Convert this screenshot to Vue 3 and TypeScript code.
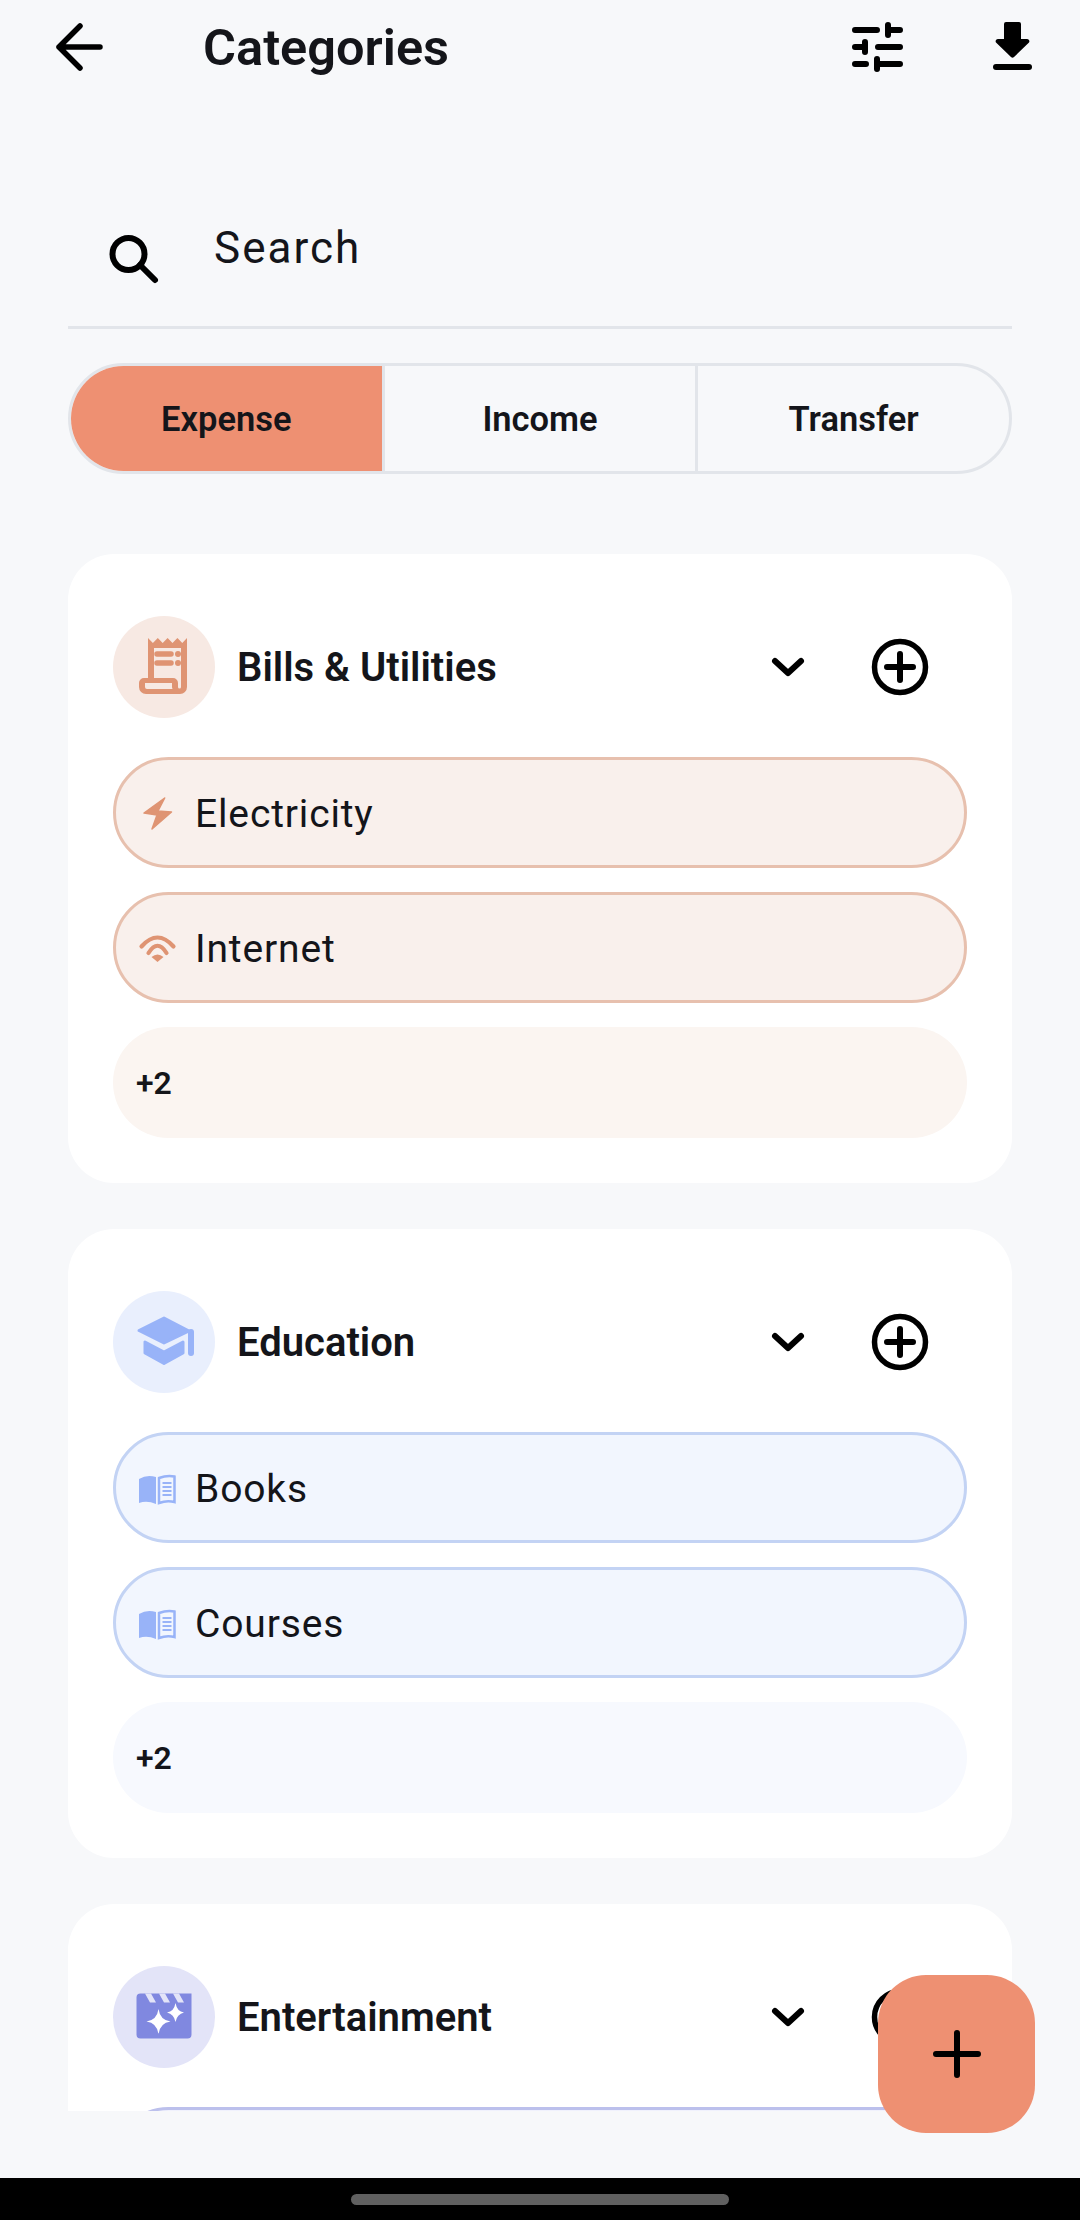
<template>
  <div class="screen">
    <div class="top-bar">
      <svg class="back" width="50" height="48" viewBox="0 0 50 48">
        <path d="M26 3 5 24l21 21M5 24h41" fill="none" stroke="#000" stroke-width="5.500" stroke-linecap="round" stroke-linejoin="round" />
      </svg>
      <div class="page-title">Categories</div>
      <svg class="sliders" width="56" height="54" viewBox="0 0 56 54">
        <g fill="none" stroke="#000" stroke-width="6" stroke-linecap="round">
          <path d="M5 10h22M38 5v10M38 10h12M5 27h10M15 22v10M28 27h22M5 44h11M27 39v10M27 44h23" />
        </g>
      </svg>
      <svg class="download" width="45" height="54" viewBox="0 0 45 54">
        <path d="M16 2h13a2 2 0 0 1 2 2v15h6c2 0 3 2 2 3.500L24 37c-1 1-2 1-3 0L6 22.500C5 21 6 19 8 19h6V4a2 2 0 0 1 2-2z" fill="#000" />
        <path d="M6 47h33" stroke="#000" stroke-width="6" stroke-linecap="round" />
      </svg>
    </div>

    <div class="search">
      <svg width="54" height="54" viewBox="0 0 54 54">
        <circle cx="22.500" cy="21" r="16" fill="none" stroke="#000" stroke-width="6" />
        <path d="M34 32l15 15" stroke="#000" stroke-width="6" stroke-linecap="round" />
      </svg>
      <span class="search-text">Search</span>
    </div>

    <div class="segments">
      <div v-for="(tab, i) in tabs" :key="tab" :class="['segment', { active: i === 0 }]">{{ tab }}</div>
    </div>

    <div class="list">
      <div v-for="cat in categories" :key="cat.name" class="card">
        <div class="card-head">
          <div class="cat-icon" :style="{ background: cat.soft }">
            <svg width="60" height="60" viewBox="0 0 60 60">
              <template v-if="cat.icon === 'receipt'">
                <path fill-rule="evenodd" :fill="cat.color" d="M14 1l4.900 5 4.900-5 4.900 5 4.900-5 4.900 5 4.900-5 4.900 5 4.700-5v49a7 7 0 0 1-7 7H12a7 7 0 0 1-7-7v-4a5 5 0 0 1 5-5h4zM20 11v30h19a5 5 0 0 1 5 5v4a1.500 1.500 0 0 0 3 0V11zM11 46v4a2 2 0 0 0 2 2h25.500a7 7 0 0 1-.500-2v-4z" />
                <path d="M23 17h14M23 26h14" :stroke="cat.color" stroke-width="5.500" stroke-linecap="round" />
                <circle cx="44" cy="17" r="3" :fill="cat.color" />
                <circle cx="44" cy="26" r="3" :fill="cat.color" />
              </template>
              <template v-else-if="cat.icon === 'school'">
                <path :fill="cat.color" stroke-linejoin="round" :stroke="cat.color" stroke-width="3" d="M30 6 5 18.500 30 31 55 19z" />
                <path :fill="cat.color" stroke-linejoin="round" :stroke="cat.color" stroke-width="3" d="M11 30v11l19 10.500L49 41V30l-19 10z" />
                <path d="M57 20v21" :stroke="cat.color" stroke-width="6" stroke-linecap="round" />
              </template>
              <template v-else>
                <path :fill="cat.color" d="M2.500 10.500a4 4 0 0 1 4-4h51v41a4 4 0 0 1-4 4h-47a4 4 0 0 1-4-4z" />
                <path :fill="cat.soft" d="M11 6.500h6l5 9h-6zM25 6.500h6l5 9h-6zM39 6.500h6l5 9h-6z" />
                <path fill="#fff" d="M24.500 22Q26 33 36.500 34.500 26 36 24.500 47 23 36 12.500 34.500 23 33 24.500 22z" />
                <path fill="#fff" d="M41.500 16Q43 24.500 50 25.500 43 27 41.500 35 40 27 33 25.500 40 24.500 41.500 16z" />
              </template>
            </svg>
          </div>
          <div class="cat-name">{{ cat.name }}</div>
          <svg class="chevron" width="36" height="26" viewBox="0 0 36 26">
            <path d="M5 7l13 12L31 7" fill="none" stroke="#000" stroke-width="6" stroke-linecap="round" stroke-linejoin="round" />
          </svg>
          <svg class="add" width="60" height="60" viewBox="0 0 60 60">
            <circle cx="30" cy="30" r="25.500" fill="none" stroke="#000" stroke-width="5.500" />
            <path d="M17 30h26M30 17v26" stroke="#000" stroke-width="6" stroke-linecap="round" />
          </svg>
        </div>
        <div class="items">
          <div
            v-for="item in cat.items"
            :key="item.label"
            class="item"
            :style="{ background: cat.tint, borderColor: cat.border }"
          >
            <svg width="44" height="40" viewBox="0 0 44 40">
              <path v-if="item.icon === 'bolt'" d="M27.700 5 7 20l13 2-5 14 19.500-17-13.500-1z" :fill="cat.color" :stroke="cat.color" stroke-width="1.500" stroke-linejoin="round" />
              <template v-else-if="item.icon === 'wifi'">
                <path d="M4.500 18.500Q20.500 .5 36.500 18.500M11.500 25Q20.500 10.500 29.500 25" fill="none" :stroke="cat.color" stroke-width="4.200" stroke-linecap="round" />
                <path d="M14.500 29Q20.500 24 26.500 29L20.500 34z" :fill="cat.color" />
              </template>
              <template v-else-if="item.icon === 'book'">
                <path d="M2 11Q10 6 19 9v27Q10 32 2 35z" :fill="cat.color" />
                <path d="M22 10Q30 7 37.500 8.500V34Q30 32 22 35z" fill="none" :stroke="cat.color" stroke-width="2.500" />
                <path d="M25.500 15h9M25.500 19h9M25.500 23h9M25.500 27h9" :stroke="cat.color" stroke-width="2" />
              </template>
            </svg>
            <span v-if="item.label" class="item-label">{{ item.label }}</span>
          </div>
          <div v-if="cat.more" class="more" :style="{ background: cat.faint }">{{ cat.more }}</div>
        </div>
      </div>
    </div>

    <div class="fab">
      <svg width="56" height="56" viewBox="0 0 56 56">
        <path d="M28 7v42M7 28h42" stroke="#000" stroke-width="6" stroke-linecap="round" />
      </svg>
    </div>

    <div class="nav-bar"><div class="nav-pill"></div></div>
  </div>
</template>

<script setup lang="ts">
interface SubItem {
  label: string
  icon: string
}

interface Category {
  name: string
  icon: string
  color: string
  soft: string
  tint: string
  border: string
  faint: string
  more: string
  items: SubItem[]
}

const tabs = ['Expense', 'Income', 'Transfer']

const categories: Category[] = [
  {
    name: 'Bills & Utilities',
    icon: 'receipt',
    color: '#df9473',
    soft: '#f7e9e3',
    tint: '#f9f0ec',
    border: '#e7c0ae',
    faint: '#fbf5f1',
    more: '+2',
    items: [
      { label: 'Electricity', icon: 'bolt' },
      { label: 'Internet', icon: 'wifi' }
    ]
  },
  {
    name: 'Education',
    icon: 'school',
    color: '#98b3f8',
    soft: '#e9effd',
    tint: '#f2f6fe',
    border: '#c3d3f4',
    faint: '#f7f9fe',
    more: '+2',
    items: [
      { label: 'Books', icon: 'book' },
      { label: 'Courses', icon: 'book' }
    ]
  },
  {
    // only the top edge of the first row shows above the clip
    name: 'Entertainment',
    icon: 'clapper',
    color: '#8088e0',
    soft: '#e3e4f8',
    tint: '#f0f1fc',
    border: '#bcc0ec',
    faint: '#f6f6fd',
    more: '',
    items: [{ label: '', icon: '' }]
  }
]
</script>

<style scoped>
.screen {
  position: relative;
  width: 1080px;
  height: 2220px;
  display: flex;
  flex-direction: column;
  background: #f7f8fa;
  color: #14151a;
  font-family: Roboto, "Liberation Sans", sans-serif;
  overflow: hidden;
}

.top-bar {
  flex: none;
  height: 94px;
  display: flex;
  align-items: center;
  padding: 0 45px 0 54px;
}

.page-title {
  margin: 2px 0 0 99px;
  font-size: 50.500px;
  font-weight: 600;
  line-height: 56px;
}

.sliders {
  margin-left: auto;
}

.download {
  margin-left: 84px;
}

.search {
  flex: none;
  height: 235px;
  margin: 0 68px;
  padding: 129px 0 0 38px;
  box-sizing: border-box;
  display: flex;
  align-items: flex-start;
  gap: 54px;
  border-bottom: 3px solid #e2e5ea;
}

.search svg {
  margin-top: 10px;
}

.search-text {
  font-size: 44px;
  line-height: 50px;
  letter-spacing: 2px;
}

.segments {
  flex: none;
  height: 111px;
  margin: 34px 68px 0;
  box-sizing: border-box;
  display: flex;
  border: 3px solid #e2e5ea;
  border-radius: 56px;
  overflow: hidden;
}

.segment {
  flex: 1;
  display: flex;
  align-items: center;
  justify-content: center;
  font-size: 34.500px;
  font-weight: 600;
  border-left: 3px solid #e2e5ea;
}

.segment:first-child {
  border-left: none;
}

.segment.active {
  background: #ee9072;
}

.list {
  flex: none;
  height: 1557px;
  margin: 80px 68px 0;
  overflow: hidden;
  display: flex;
  flex-direction: column;
  gap: 46px;
}

.card {
  flex: none;
  background: #fff;
  border-radius: 46px;
  padding: 62px 45px 45px;
}

.card-head {
  display: flex;
  align-items: center;
  height: 101px;
  margin-bottom: 40px;
}

.cat-icon {
  flex: none;
  width: 102px;
  height: 102px;
  border-radius: 50%;
  display: flex;
  align-items: center;
  justify-content: center;
}

.cat-name {
  flex: 1;
  margin: 2px 0 0 22px;
  font-size: 40px;
  font-weight: 600;
}

.add {
  margin: 0 37px 0 64px;
}

.items {
  display: flex;
  flex-direction: column;
  gap: 24px;
}

.item,
.more {
  height: 111px;
  box-sizing: border-box;
  border-radius: 56px;
  display: flex;
  align-items: center;
}

.item {
  padding-left: 21px;
  border: 3px solid;
}

.item-label {
  margin: 2px 0 0 14px;
  font-size: 39px;
  letter-spacing: 0.850px;
}

.more {
  padding-left: 23px;
  font-size: 32px;
  font-weight: 600;
}

.fab {
  position: absolute;
  left: 878px;
  top: 1975px;
  width: 157px;
  height: 158px;
  border-radius: 48px;
  background: #ee9072;
  display: flex;
  align-items: center;
  justify-content: center;
}

.nav-bar {
  margin-top: auto;
  height: 42px;
  background: #000;
  display: flex;
  justify-content: center;
  padding-top: 16px;
  box-sizing: border-box;
}

.nav-pill {
  width: 378px;
  height: 11px;
  border-radius: 6px;
  background: #606060;
}
</style>

<style>
html,
body {
  background: #f7f8fa;
}
</style>
